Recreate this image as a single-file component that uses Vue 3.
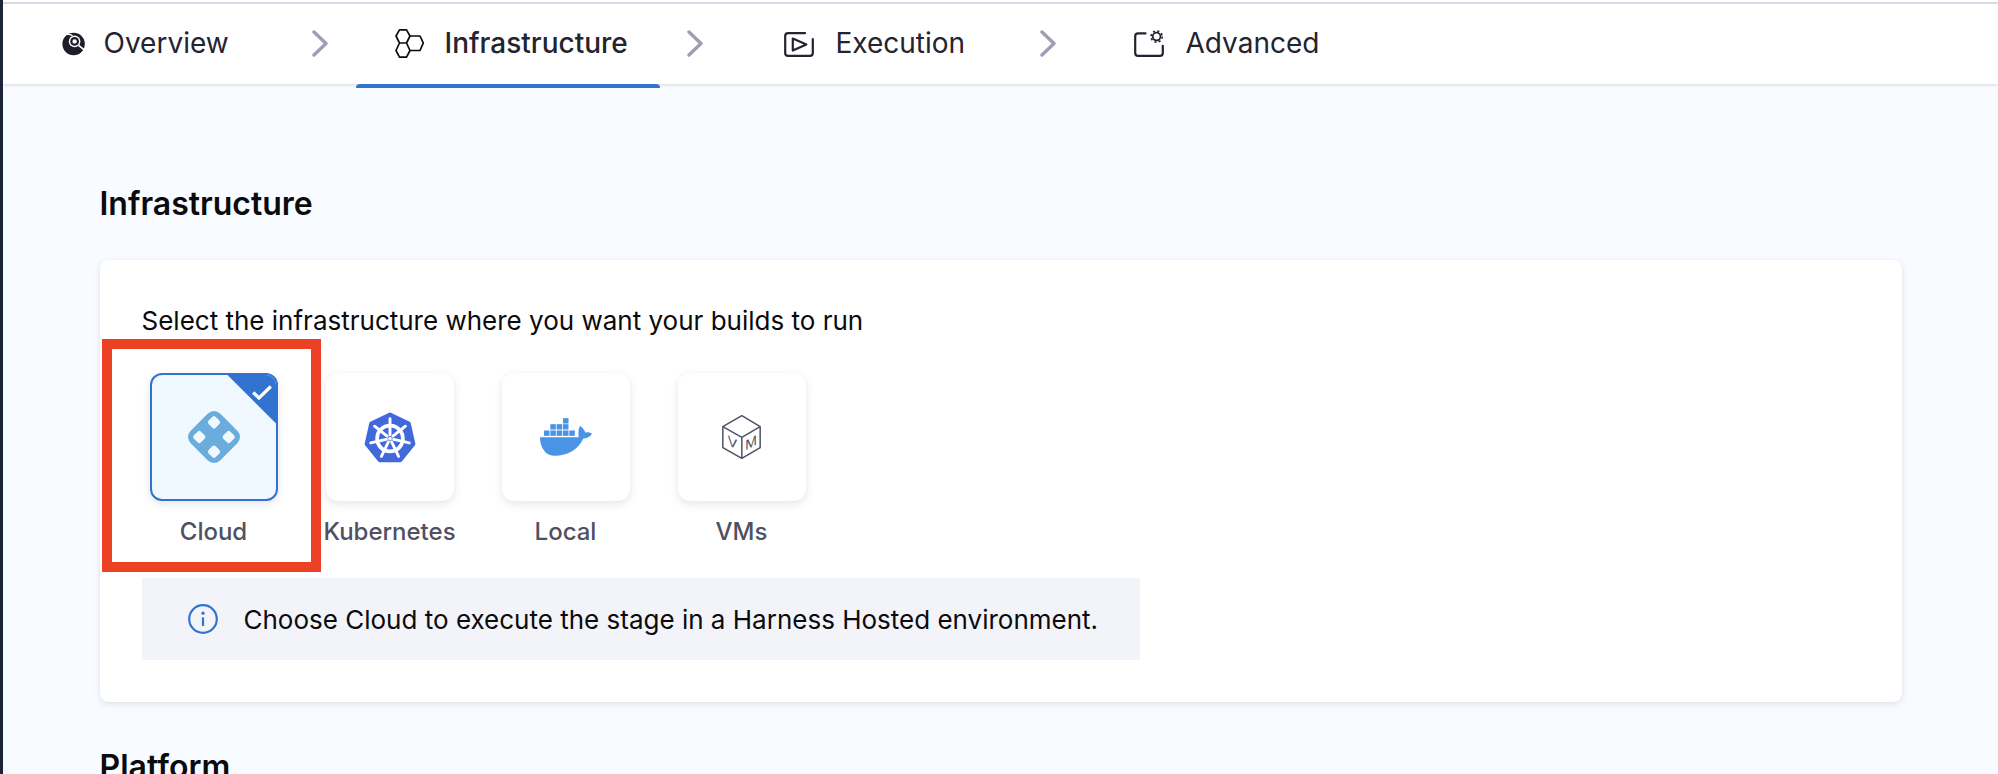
<script setup>
const hexPts = [[25,2.5],[43,11.2],[47.4,30.6],[35,46.2],[15,46.2],[2.6,30.6],[7,11.2]].map(p => p.join(',')).join(' ')
const spokes = Array.from({ length: 7 }, (_, i) => {
  const a = (-90 + i * 360 / 7) * Math.PI / 180
  return {
    x1: 25 + 3.6 * Math.cos(a), y1: 25.5 + 3.6 * Math.sin(a),
    x2: 25 + 19 * Math.cos(a), y2: 25.5 + 19 * Math.sin(a)
  }
})
const dockerRows = [
  { y: 212, h: 16, xs: [192, 211, 230, 249, 268] },
  { y: 193, h: 16, xs: [211, 230, 249] },
  { y: 175, h: 16, xs: [249] }
]
</script>

<template>
  <div class="page">
    <nav class="steps">
      <div class="step step-overview">
        <svg class="ic ic-overview" viewBox="0 0 24 24">
          <circle cx="11.6" cy="12" r="11.2" fill="#1c1d28" />
          <path d="M4.5 2.4 C7 2.2 9 2.6 10.5 3.6" fill="none" stroke="#fff" stroke-width="1.4" />
          <circle cx="12.6" cy="9.4" r="5.8" fill="#fff" />
          <circle cx="12.6" cy="9.4" r="4.4" fill="#1c1d28" />
          <circle cx="12.6" cy="9.4" r="2.2" fill="#fff" />
          <path d="M16.6 13.4 L24 19.4" stroke="#fff" stroke-width="1.6" />
        </svg>
        <span>Overview</span>
      </div>
      <svg class="sep sep-1" viewBox="0 0 16 27"><path d="M2 2 L14 13.5 L2 25" /></svg>
      <div class="step step-infra">
        <svg class="ic ic-infra" viewBox="0 0 29 29">
          <path d="M4.5 .9 H11.5 L15 7 L11.5 14 H4.5 L1 7 Z M15 7 H25 L28.3 14 L25 21.5 H15 M11.5 14 L15 21.5 L11.5 28.2 H4.5 L1 21.5 L4.5 14" />
        </svg>
        <span>Infrastructure</span>
      </div>
      <svg class="sep sep-2" viewBox="0 0 16 27"><path d="M2 2 L14 13.5 L2 25" /></svg>
      <div class="step step-exec">
        <svg class="ic ic-exec" viewBox="0 0 30 25">
          <path d="M21 1.2 H4 Q1.2 1.2 1.2 4 V21 Q1.2 23.8 4 23.8 H26 Q28.8 23.8 28.8 21 V7" />
          <path d="M8.8 6.6 L22.4 12.4 L8.8 18.6 Z" />
        </svg>
        <span>Execution</span>
      </div>
      <svg class="sep sep-3" viewBox="0 0 16 27"><path d="M2 2 L14 13.5 L2 25" /></svg>
      <div class="step step-adv">
        <svg class="ic ic-adv" viewBox="0 0 30 27">
          <path d="M11.5 3.4 H4 Q1.2 3.4 1.2 6.2 V23 Q1.2 25.8 4 25.8 H26 Q28.8 25.8 28.8 23 V15.8" />
          <circle class="gear" cx="22.6" cy="6.6" r="3.9" />
          <circle class="teeth" cx="22.6" cy="6.6" r="5.6" />
        </svg>
        <span>Advanced</span>
      </div>
    </nav>

    <main class="content">
      <h2 class="heading">Infrastructure</h2>
      <section class="card">
        <p class="lead">Select the infrastructure where you want your builds to run</p>
        <div class="tiles">
          <div class="tile-col">
            <div class="tile selected">
              <span class="corner"></span>
              <svg class="check" viewBox="0 0 20 15"><path d="M1.2 7.5 L7 13 L18.8 1.5" /></svg>
              <svg class="cloud" viewBox="-26 -26 52 52">
                <g transform="rotate(45)">
                  <rect x="-21" y="-21" width="42" height="42" rx="9" fill="#6aaddc" />
                  <rect x="-15.4" y="-15.4" width="10" height="10" rx="2.4" fill="#f0f9ff" />
                  <rect x="5.4" y="-15.4" width="10" height="10" rx="2.4" fill="#f0f9ff" />
                  <rect x="-15.4" y="5.4" width="10" height="10" rx="2.4" fill="#f0f9ff" />
                  <rect x="5.4" y="5.4" width="10" height="10" rx="2.4" fill="#f0f9ff" />
                </g>
              </svg>
            </div>
            <span class="tile-label">Cloud</span>
          </div>
          <div class="tile-col">
            <div class="tile">
              <svg class="k8s" viewBox="0 0 50 49">
                <polygon :points="hexPts" fill="#4169dc" stroke="#4169dc" stroke-width="4" stroke-linejoin="round" />
                <circle cx="25" cy="25.5" r="12.4" fill="none" stroke="#fff" stroke-width="3.6" />
                <line v-for="(s, i) in spokes" :key="i" :x1="s.x1" :y1="s.y1" :x2="s.x2" :y2="s.y2" stroke="#fff" stroke-width="2.8" stroke-linecap="round" />
                <circle cx="25" cy="25.5" r="1.8" fill="#fff" />
              </svg>
            </div>
            <span class="tile-label">Kubernetes</span>
          </div>
          <div class="tile-col">
            <div class="tile">
              <svg class="docker" viewBox="180 175 156 113">
                <g v-for="(r, i) in dockerRows" :key="i">
                  <rect v-for="x in r.xs" :key="x" :x="x" :y="r.y" width="16.5" :height="r.h" fill="#4a94e6" />
                </g>
                <path d="M180 232 H296 C295 222 294 210 300 198 C307 204 314 211 316 219 C322 216 330 218 336 222 C330 232 320 236 310 236 C296 268 262 288 225 288 C196 288 180 262 180 232 Z" fill="#4a94e6" />
              </svg>
            </div>
            <span class="tile-label">Local</span>
          </div>
          <div class="tile-col">
            <div class="tile">
              <svg class="vm" viewBox="725 167 122 138">
                <path d="M787 172 L842 205 V268 L787 300 L730 268 V205 Z M730 205 L787 237 L842 205 M787 237 V300" fill="none" stroke="#4f5162" stroke-width="4.5" stroke-linejoin="round" />
                <text class="vm-letter" transform="translate(759 267) skewY(28)" text-anchor="middle">V</text>
                <text class="vm-letter" transform="translate(815 267) skewY(-28)" text-anchor="middle">M</text>
              </svg>
            </div>
            <span class="tile-label">VMs</span>
          </div>
        </div>
        <div class="info">
          <svg class="info-ic" viewBox="0 0 30 30">
            <circle cx="15" cy="15" r="13.8" />
            <circle class="dot" cx="15" cy="9.2" r="1.6" />
            <path d="M15 13.4 V22" />
          </svg>
          <span>Choose Cloud to execute the stage in a Harness Hosted environment.</span>
        </div>
        <div class="annotation"></div>
      </section>
      <h2 class="heading platform">Platform</h2>
    </main>
  </div>
</template>

<style>
html, body { margin: 0; overflow: hidden; background: #f8fbff; }
</style>

<style scoped>
.page {
  width: 1998px;
  height: 774px;
  box-sizing: border-box;
  border-left: 3.5px solid #1e2538;
  background: #f8fbff;
  overflow: hidden;
  font-family: Inter, "Liberation Sans", sans-serif;
  color: #0b0b0d;
}
.steps {
  box-sizing: border-box;
  height: 84px;
  padding-top: 2px;
  background: linear-gradient(#fff 2px, #d9dae5 2px, #d9dae5 4px, #fff 4px);
  box-shadow: 0 1px 3px rgba(96, 97, 112, .22);
  display: flex;
  align-items: center;
  position: relative;
  font-size: 28px;
  color: #23242f;
}
.step {
  display: flex;
  align-items: center;
  height: 82px;
  white-space: nowrap;
}
.step-overview { margin-left: 58.5px; width: 250px; gap: 18px; }
.step-infra {
  position: relative;
  width: 304px;
  margin-left: 28px;
  padding-left: 39px;
  box-sizing: border-box;
  gap: 21px;
  font-weight: 500;
}
.step-infra::after {
  content: "";
  position: absolute;
  left: 0;
  right: 0;
  bottom: -4px;
  height: 4px;
  background: #3273d1;
  border-radius: 4px 4px 0 0;
}
.step-exec { width: 256px; margin-left: 81px; gap: 22px; }
.step-adv { margin-left: 78px; gap: 22px; }
.sep {
  width: 16px;
  height: 27px;
  flex: none;
  fill: none;
  stroke: #9d9eb5;
  stroke-width: 3.4;
  stroke-linecap: round;
  stroke-linejoin: round;
}
.sep-2 { margin-left: 27px; }
.ic { flex: none; fill: none; stroke: #23242f; }
.ic-overview { width: 24px; height: 24px; stroke: none; margin-top: 2px; }
.ic-infra { width: 29px; height: 29px; stroke: #0b0b0d; stroke-width: 1.7; stroke-linejoin: round; }
.ic-exec { width: 30px; height: 25px; stroke-width: 2.2; stroke-linejoin: round; stroke-linecap: round; margin-top: 2px; }
.ic-adv { width: 30px; height: 27px; stroke-width: 2.2; stroke-linecap: round; }
.ic-adv .gear { stroke-width: 1.8; }
.ic-adv .teeth { stroke-width: 1.6; stroke-dasharray: 2.1 2.3; stroke-linecap: butt; }
.content { padding: 0 96.5px; }
.heading {
  margin: 102px 0 38px;
  font-size: 32px;
  line-height: 36px;
  font-weight: 600;
}
.card {
  position: relative;
  box-sizing: border-box;
  height: 442px;
  padding: 44px 42px 42px;
  background: #fff;
  border-radius: 8px;
  box-shadow: 0 0 1px rgba(40, 41, 61, .08), 0 2px 6px rgba(96, 97, 112, .16);
}
.lead {
  margin: 0;
  font-size: 26px;
  line-height: 34px;
  color: #0b0b0d;
}
.tiles {
  display: flex;
  gap: 48px;
  margin: 35px 0 0 8px;
}
.tile-col {
  width: 128px;
  display: flex;
  flex-direction: column;
  align-items: center;
}
.tile {
  position: relative;
  box-sizing: border-box;
  width: 128px;
  height: 128px;
  display: flex;
  align-items: center;
  justify-content: center;
  background: #fff;
  border-radius: 12px;
  overflow: hidden;
  box-shadow: 0 0 1px rgba(40, 41, 61, .06), 0 3px 8px rgba(96, 97, 112, .16);
}
.tile.selected {
  background: #f0f9ff;
  border: 2px solid #3273d1;
}
.corner {
  position: absolute;
  top: -2px;
  right: -2px;
  width: 52px;
  height: 52px;
  background: #3273d1;
  clip-path: polygon(0 0, 100% 0, 100% 100%);
}
.check {
  position: absolute;
  top: 10px;
  right: 4px;
  width: 20px;
  height: 15px;
  fill: none;
  stroke: #fff;
  stroke-width: 3.2;
}
.cloud { width: 52px; height: 52px; }
.k8s { width: 52px; height: 51px; }
.docker { width: 52px; height: 38px; margin-top: -1px; }
.vm { width: 41px; height: 46px; }
.vm-letter {
  font-family: "Liberation Sans", sans-serif;
  font-size: 42px;
  fill: #4f5162;
}
.tile-label {
  margin-top: 14px;
  font-size: 24px;
  line-height: 34px;
  font-weight: 500;
  color: #4f5162;
  white-space: nowrap;
}
.info {
  box-sizing: border-box;
  width: 998px;
  height: 82px;
  margin-top: 29px;
  padding-left: 46px;
  display: flex;
  align-items: center;
  gap: 26px;
  background: #f3f3fa;
  font-size: 26px;
  color: #0b0b0d;
}
.info-ic {
  width: 30px;
  height: 30px;
  flex: none;
  fill: none;
  stroke: #3273d1;
  stroke-width: 2.2;
}
.info-ic .dot { fill: #3273d1; stroke: none; }
.annotation {
  position: absolute;
  left: 2px;
  top: 79px;
  box-sizing: border-box;
  width: 219px;
  height: 233px;
  border: 10px solid #ec4125;
  pointer-events: none;
}
.platform { margin: 47px 0 0; }
</style>
